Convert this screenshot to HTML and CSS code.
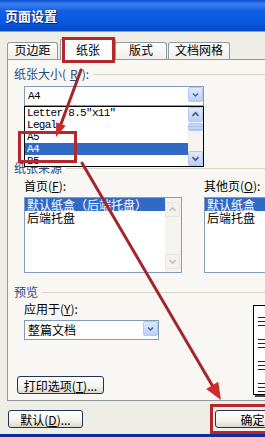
FILE: index.html
```html
<!DOCTYPE html>
<html lang="zh-CN">
<head>
    <meta charset="UTF-8">
    <meta name="viewport" content="width=device-width, initial-scale=1.0">
    <title>页面设置</title>
    <link rel="stylesheet" href="styles.css">
</head>
<body>
    <div class="window">
        <div class="titlebar">页面设置</div>
        <div class="client">
            <div class="tabs">
                <div class="tab tab-margins">页边距</div>
                <div class="tab tab-paper active">纸张</div>
                <div class="tab tab-layout">版式</div>
                <div class="tab tab-grid">文档网格</div>
            </div>

            <div class="panel">
                <div class="group-head head-size">纸张大小(<u>R</u>):</div>
                <div class="combo size-combo">
                    <span class="combo-text latin">A4</span>
                    <span class="sb-btn combo-btn">
                        <svg viewBox="0 0 15 18"><path d="M4 7.5 L7.5 11 L11 7.5"/></svg>
                    </span>
                    <div class="popup">
                        <ul class="items latin">
                            <li>Letter 8.5″x11″</li>
                            <li>Legal</li>
                            <li>A5</li>
                            <li class="selected">A4</li>
                            <li>B5</li>
                        </ul>
                        <div class="vscroll">
                            <span class="sb-btn">
                                <svg viewBox="0 0 15 15"><path d="M4 9 L7.5 5.5 L11 9"/></svg>
                            </span>
                            <span class="thumb"></span>
                            <span class="sb-btn bottom">
                                <svg viewBox="0 0 15 15"><path d="M4 6 L7.5 9.5 L11 6"/></svg>
                            </span>
                        </div>
                    </div>
                </div>

                <div class="group-head head-source">纸张来源</div>
                <div class="trays">
                    <div class="tray tray-first">
                        <div class="label">首页(<u>F</u>):</div>
                        <div class="listbox">
                            <ul class="items">
                                <li class="selected">默认纸盒（后端托盘）</li>
                                <li>后端托盘</li>
                            </ul>
                            <div class="vscroll disabled">
                                <span class="sb-btn">
                                    <svg viewBox="0 0 15 15"><path d="M4 9 L7.5 5.5 L11 9"/></svg>
                                </span>
                                <span class="sb-btn bottom">
                                    <svg viewBox="0 0 15 15"><path d="M4 6 L7.5 9.5 L11 6"/></svg>
                                </span>
                            </div>
                        </div>
                    </div>
                    <div class="tray tray-other">
                        <div class="label">其他页(<u>O</u>):</div>
                        <div class="listbox">
                            <ul class="items">
                                <li class="selected">默认纸盒</li>
                                <li>后端托盘</li>
                            </ul>
                        </div>
                    </div>
                </div>

                <div class="group-head head-preview">预览</div>
                <div class="preview-row">
                    <div class="apply">
                        <div class="label">应用于(<u>Y</u>):</div>
                        <div class="combo apply-combo">
                            <span class="combo-text">整篇文档</span>
                            <span class="sb-btn combo-btn">
                                <svg viewBox="0 0 15 18"><path d="M4 7.5 L7.5 11 L11 7.5"/></svg>
                            </span>
                        </div>
                        <button class="btn print-btn">打印选项(<u>T</u>)...</button>
                    </div>
                    <div class="page">
                        <div class="para"><i></i><i></i><i></i></div>
                        <div class="para"><i></i><i></i><i></i></div>
                        <div class="para"><i></i><i></i><i></i></div>
                        <div class="para"><i></i><i></i><i></i></div>
                    </div>
                </div>
            </div>

            <div class="footer">
                <button class="btn default-btn">默认(<u>D</u>)...</button>
                <div class="footer-right">
                    <button class="btn">确定</button>
                    <button class="btn">取消</button>
                </div>
            </div>
        </div>
    </div>

    <!-- red annotations drawn over the dialog -->
    <svg class="marks" viewBox="0 0 265 437">
        <rect x="63.5" y="38.5" width="50" height="23"/>
        <rect x="19.5" y="132.5" width="56" height="29"/>
        <rect x="211.5" y="405.5" width="60" height="27"/>
        <line x1="81" y1="70" x2="61" y2="124"/>
        <polygon points="56,137 65.6,125.7 56.2,122.2"/>
        <line x1="82" y1="163" x2="212" y2="385"/>
        <polygon points="221,400 218.2,381.8 206.2,389"/>
    </svg>
</body>
</html>
```

FILE: styles.css
```css
* {
    box-sizing: border-box;
}
body {
    position: relative;
    margin: 0;
    width: 265px;
    height: 437px;
    overflow: hidden;
    background: #eeede6;
    font-family: "Noto Sans CJK SC", sans-serif;
    font-size: 12px;
    color: #000;
}
ul {
    margin: 0;
    padding: 0;
    list-style: none;
}
.latin {
    font-family: "Liberation Mono", "Noto Sans CJK SC", monospace;
    font-size: 11px;
    letter-spacing: -0.7px;
}

.window {
    width: 378px;
    height: 437px;
    display: flex;
    flex-direction: column;
    border-bottom: 3px solid #0b2f9e;
}
.titlebar {
    flex: none;
    height: 32px;
    padding: 6px 0 0 5px;
    font-size: 13px;
    font-weight: bold;
    line-height: 20px;
    color: #fff;
    text-shadow: 1px 1px 0 #0a2478;
    background: linear-gradient(#0a4ccc, #3a80f2 12%, #105fe2 35%, #0656df 75%, #0648c4 96%, #c9d6f0);
}
.client {
    flex: 1;
    padding: 0 7px;
    background: #eeede6;
}

/* tabs */
.tabs {
    display: flex;
    align-items: flex-end;
    height: 27px;
}
.tab {
    height: 17px;
    line-height: 14px;
    text-align: center;
    border: 1px solid #919b9c;
    border-bottom: none;
    border-radius: 3px 3px 0 0;
    background: linear-gradient(#fefefe, #efeee9);
}
.tab-margins {
    width: 51px;
}
.tab-paper {
    width: 56px;
    margin-left: 2px;
}
.tab.active {
    position: relative;
    z-index: 1;
    height: 22px;
    margin-bottom: -1px;
    line-height: 19px;
    border-top: 2px solid #f0a33c;
    background: #fcfcfa;
}
.tab-layout {
    width: 52px;
    margin-left: -1px;
}
.tab-grid {
    width: 62px;
    margin-left: 1px;
}

/* panel */
.panel {
    height: 342px;
    padding: 0 6px;
    border: 1px solid #919b9c;
    background: #f8f7f3;
}
.group-head {
    display: flex;
    align-items: center;
    gap: 4px;
    height: 14px;
    line-height: 14px;
    color: #2a4a7c;
}
.group-head::after {
    content: "";
    flex: 1;
    height: 1px;
    background: #d6d5c8;
}
.head-size {
    margin-top: 7px;
}
.head-source {
    margin-top: 55px;
}
.head-preview {
    margin-top: 12px;
}
.label {
    height: 14px;
    line-height: 14px;
}

.combo {
    position: relative;
    display: flex;
    height: 20px;
    margin-left: 10px;
    border: 1px solid #7f9db9;
    background: #fff;
}
.combo-text {
    flex: 1;
    padding-left: 3px;
    line-height: 18px;
}
.size-combo {
    width: 180px;
    margin-top: 5px;
}
.combo-btn {
    width: 15px;
    height: 18px;
}

/* scroll buttons */
.sb-btn {
    display: block;
    width: 15px;
    height: 15px;
    border: 1px solid #b4c6f0;
    border-radius: 2px;
    background: linear-gradient(#e0e9fd, #bccff8);
}
.sb-btn svg {
    display: block;
    width: 100%;
    height: 100%;
}
.sb-btn path {
    fill: none;
    stroke: #4d6185;
    stroke-width: 2;
}
.vscroll {
    display: flex;
    flex-direction: column;
    width: 15px;
    background: #f4f3ee;
}
.vscroll .bottom {
    margin-top: auto;
}
.thumb {
    height: 8px;
    margin-top: 1px;
    border: 1px solid #b4c6f0;
    border-radius: 2px;
    background: repeating-linear-gradient(#c6d5fb 0 2px, #a9bdf0 2px 3px);
}
.vscroll.disabled {
    width: 16px;
    padding-top: 4px;
    padding-bottom: 3px;
}
.vscroll.disabled .sb-btn {
    border-color: #e6e4dc;
    background: #f3f2ee;
}
.vscroll.disabled path {
    stroke: #c9c7bc;
}

/* open dropdown of the paper size combo */
.popup {
    position: absolute;
    z-index: 2;
    top: 19px;
    left: -1px;
    display: flex;
    width: 180px;
    height: 61px;
    overflow: hidden;
    border: 1px solid #000;
    background: #fff;
}
.items {
    flex: 1;
    min-width: 0;
}
.items li {
    height: 12px;
    padding-left: 2px;
    line-height: 12px;
    white-space: nowrap;
    overflow: hidden;
}
.items li.selected {
    background: #316ac5;
    color: #fff;
}

/* trays */
.trays {
    display: flex;
    margin-top: 4px;
    margin-left: 10px;
}
.tray-first {
    width: 158px;
}
.tray-other {
    width: 150px;
    margin-left: 22px;
}
.listbox {
    display: flex;
    height: 76px;
    margin-top: 4px;
    border: 1px solid #7f9db9;
    background: #fff;
}
.listbox .items li {
    height: 13px;
    line-height: 13px;
}

/* preview */
.preview-row {
    display: flex;
}
.apply {
    width: 239px;
}
.apply .label {
    margin: 3px 0 0 10px;
}
.apply-combo {
    width: 135px;
    margin-top: 4px;
}
.print-btn {
    width: 87px;
    margin: 36px 0 0 3px;
}
.page {
    width: 70px;
    height: 90px;
    margin-top: 6px;
    padding: 11px 0 0 4px;
    border: 1px solid #000;
    background: #fff;
    box-shadow: 2px 2px 0 #444;
}
.para {
    display: flex;
    flex-direction: column;
    gap: 3px;
    margin-bottom: 13px;
}
.para i {
    display: block;
    width: 40px;
    height: 1px;
    background: #222;
}

/* buttons */
.btn {
    height: 18px;
    padding: 0;
    border: 1px solid #1f3553;
    border-radius: 3px;
    background: linear-gradient(#fff, #f4f4f0 55%, #dcd8ce);
    font-family: "Noto Sans CJK SC", sans-serif;
    font-size: 12px;
    line-height: 15px;
    color: #000;
}
.footer {
    display: flex;
    margin-top: 9px;
}
.footer .btn {
    width: 75px;
}
.default-btn {
    margin-left: 1px;
}
.footer-right {
    display: flex;
    gap: 6px;
    margin-left: auto;
}

/* annotations */
.marks {
    position: absolute;
    z-index: 10;
    top: 0;
    left: 0;
    width: 265px;
    height: 437px;
    pointer-events: none;
}
.marks rect {
    fill: none;
    stroke: #b3272d;
    stroke-width: 3;
}
.marks line {
    stroke: #a3262c;
    stroke-width: 3;
    stroke-linecap: round;
}
.marks polygon {
    fill: #cf2a2a;
}
```
